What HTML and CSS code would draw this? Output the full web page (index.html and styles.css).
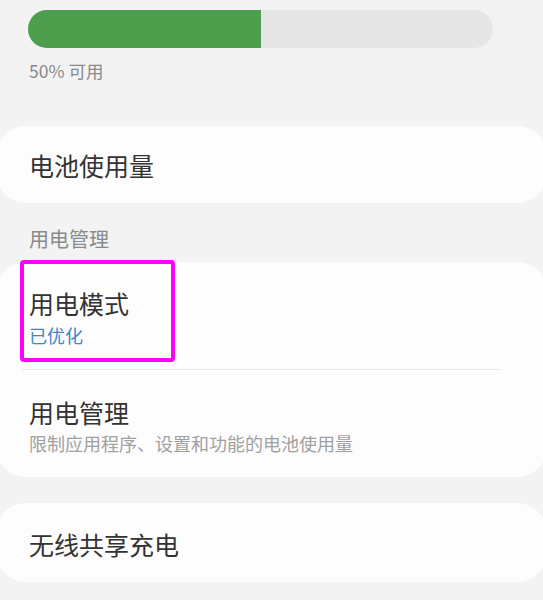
FILE: index.html
```html
<!DOCTYPE html>
<html lang="zh-CN">
<head>
<meta charset="utf-8">
<link rel="stylesheet" href="styles.css">
</head>
<body>
<div class="page">
  <div class="bar"><div class="bar-fill" style="width:50%"></div></div>
  <div class="avail">50% 可用</div>

  <div class="card single"><div class="title">电池使用量</div></div>

  <div class="section">用电管理</div>

  <div class="card">
    <div class="item first">
      <div class="title">用电模式</div>
      <div class="sub blue">已优化</div>
      <div class="highlight"></div>
    </div>
    <div class="divider"></div>
    <div class="item second">
      <div class="title">用电管理</div>
      <div class="sub">限制应用程序、设置和功能的电池使用量</div>
    </div>
  </div>

  <div class="card single last"><div class="title">无线共享充电</div></div>
</div>
</body>
</html>
```

FILE: styles.css
```css
html, body {
  margin: 0;
  padding: 0;
  background: #f3f3f3;
}
body {
  font-family: "Noto Sans CJK SC", "Noto Sans", sans-serif;
  width: 543px;
  height: 600px;
  overflow: hidden;
}
.page {
  padding-top: 10px;
}
.bar {
  margin-left: 28px;
  width: 465px;
  height: 38px;
  border-radius: 19px;
  background: #e6e6e6;
  overflow: hidden;
}
.bar-fill {
  height: 100%;
  background: #4d9e4d;
}
.avail {
  margin: 12px 0 0 29px;
  font-size: 17.5px;
  line-height: 22px;
  color: #8a8a8a;
}
.card {
  background: #fdfdfd;
  border-radius: 30px;
  margin: 0 -4px;
}
.single {
  margin-top: 44px;
  height: 77px;
  display: flex;
  align-items: center;
  padding-left: 33px;
}
.single.last {
  margin-top: 26px;
  height: 79px;
  padding-top: 2px;
  box-sizing: border-box;
}
.title {
  font-size: 25px;
  line-height: 30px;
  color: #333;
}
.section {
  margin: 24px 0 11px 29px;
  font-size: 20px;
  line-height: 24px;
  color: #8a8a8a;
}
.item {
  position: relative;
  padding-left: 33px;
}
.item.first {
  padding-top: 26px;
  padding-bottom: 23px;
}
.item.second {
  padding-top: 27px;
  padding-bottom: 23px;
}
.sub {
  margin-top: 6px;
  font-size: 18px;
  line-height: 22px;
  color: #a0a0a0;
}
.item.second .sub {
  margin-top: 5px;
}
.sub.blue {
  color: #3a88cc;
}
.divider {
  height: 1px;
  background: #e9e9e9;
  margin: 0 47px 0 26px;
}
.highlight {
  position: absolute;
  top: -2px;
  left: 24px;
  width: 155px;
  height: 102px;
  box-sizing: border-box;
  border: 4px solid #ff00ff;
  border-radius: 4px;
}
```
